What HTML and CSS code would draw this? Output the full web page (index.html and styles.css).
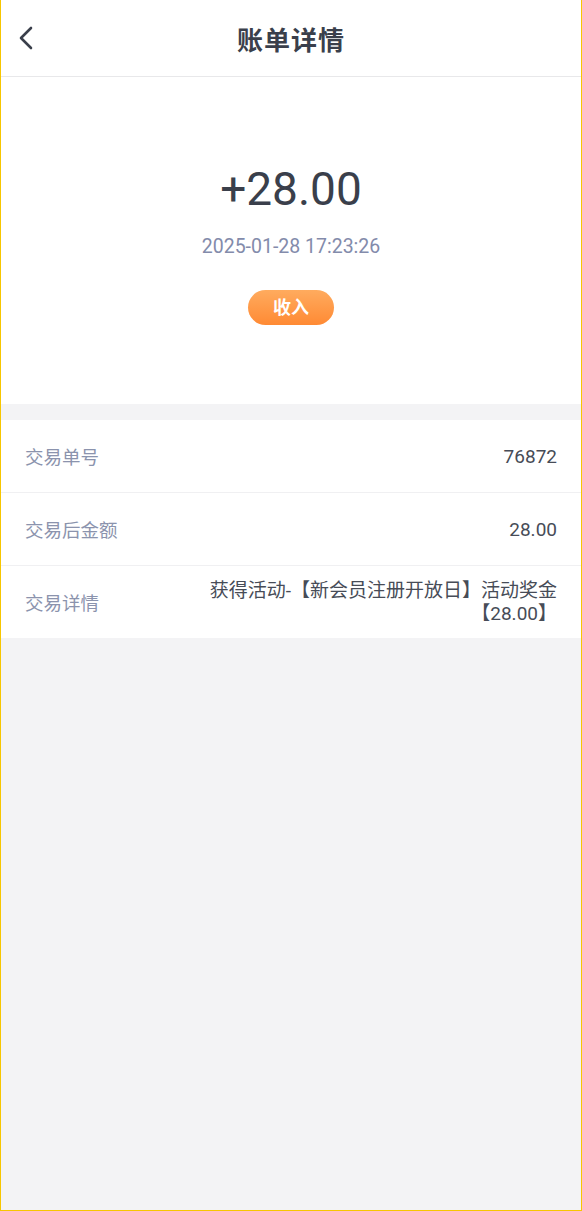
FILE: index.html
```html
<!DOCTYPE html>
<html lang="zh-CN">
<head>
  <meta charset="utf-8">
  <meta name="viewport" content="width=device-width, initial-scale=1">
  <title>账单详情</title>
  <link rel="stylesheet" href="styles.css">
</head>
<body>

<div class="page">
  <div class="topbar">
    <a class="back" href="#">
      <svg width="16" height="24" viewBox="0 0 16 24"><path d="M13 2 L3 12 L13 22" fill="none" stroke="#3a3f4b" stroke-width="2.6" stroke-linecap="round" stroke-linejoin="round"/></svg>
    </a>
    <h1>账单详情</h1>
  </div>

  <div class="summary">
    <div class="amount">+28.00</div>
    <div class="time">2025-01-28 17:23:26</div>
    <span class="tag">收入</span>
  </div>

  <div class="details">
    <div class="row">
      <span class="label">交易单号</span>
      <span class="value">76872</span>
    </div>
    <div class="row">
      <span class="label">交易后金额</span>
      <span class="value">28.00</span>
    </div>
    <div class="row">
      <span class="label">交易详情</span>
      <span class="value">获得活动-【新会员注册开放日】活动奖金【28.00】</span>
    </div>
  </div>
</div>

</body>
</html>
```

FILE: styles.css
```css
html, body {margin: 0; padding: 0;}
body {background: #f3f3f5; font-family: Roboto, "Noto Sans CJK SC", sans-serif; color: #3a3f4b;}
.page {min-height: 100vh; box-sizing: border-box; border: 1px solid #f7c600; border-top: 0; background: #f3f3f5;}

.topbar {position: relative; height: 76px; background: #fff; border-bottom: 1px solid #e8e8ea; display: flex; align-items: center; justify-content: center;}
.topbar h1 {margin: 0; font-size: 26px; font-weight: bold; color: #3a3f4b; letter-spacing: 1px;}
.back {position: absolute; left: 17px; top: 26px; display: block; width: 16px; height: 24px;}
.back svg {display: block;}

.summary {background: #fff; padding: 85px 0 79px; text-align: center; margin-bottom: 16px;}
.amount {font-size: 46px; line-height: 55px; color: #3a3f4b;}
.time {font-size: 19.5px; line-height: 24px; margin-top: 18px; color: #838bab;}
.tag {display: inline-block; margin-top: 31px; width: 86px; height: 35px; line-height: 35px; border-radius: 18px; background: linear-gradient(#ffab5e, #ff8a34); color: #fff; font-size: 18px; font-weight: bold;}

.details {background: #fff;}
.row {display: flex; align-items: center; justify-content: space-between; min-height: 72px; padding: 0 24px 0 24px; border-top: 1px solid #f0f0f2; font-size: 18.5px;}
.row:first-child {border-top: 0;}
.label {color: #8b93ad; white-space: nowrap;}
.value {text-align: right; line-height: 23px; max-width: 360px; font-size: 19px; color: #474c57;}
```
